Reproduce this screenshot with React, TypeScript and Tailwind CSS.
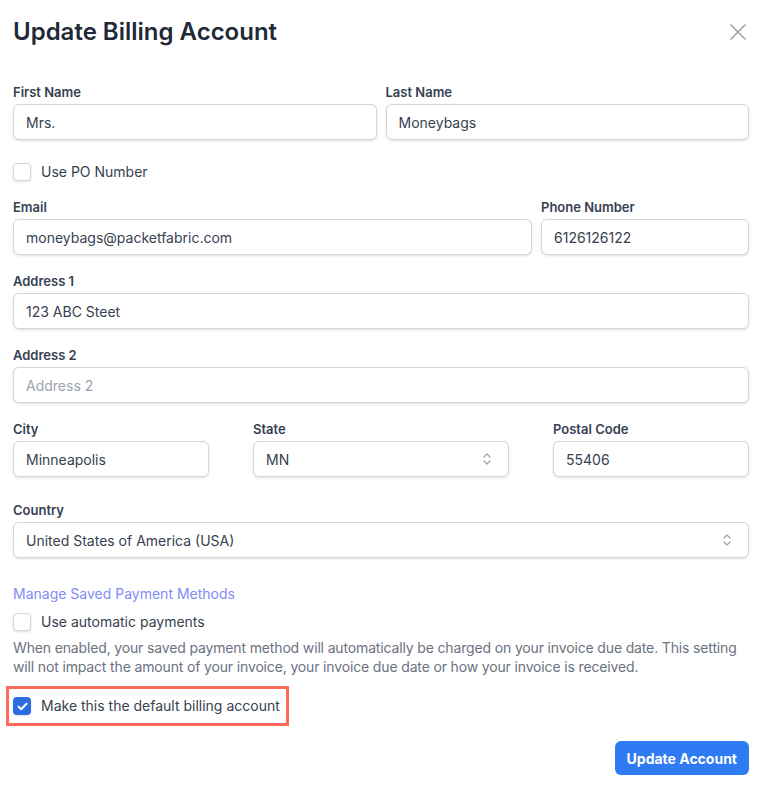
import React from "react";

const FONT = { fontFamily: "Inter, 'Noto Sans', sans-serif" };

function Label({ children }: { children: React.ReactNode }) {
  return <label className="mb-[2px] block text-[13px] font-semibold leading-5 text-[#374151]">{children}</label>;
}

function TextField({ label, value, placeholder }: { label: string; value?: string; placeholder?: string }) {
  return (
    <div>
      <Label>{label}</Label>
      <input
        readOnly
        value={value ?? ""}
        placeholder={placeholder}
        className="block h-9 w-full rounded-md border border-[#d4d6dd] bg-white px-3 text-[14px] text-[#374151] shadow-sm outline-none placeholder:text-[#9ca3af]"
      />
    </div>
  );
}

function UpDown() {
  return (
    <svg width="10" height="14" viewBox="0 0 10 14" fill="none" aria-hidden="true">
      <path d="M2 5 5 2 8 5" stroke="#9ca3af" strokeWidth="1.3" strokeLinecap="round" strokeLinejoin="round" />
      <path d="M2 9 5 12 8 9" stroke="#9ca3af" strokeWidth="1.3" strokeLinecap="round" strokeLinejoin="round" />
    </svg>
  );
}

function SelectField({ label, value }: { label: string; value: string }) {
  return (
    <div>
      <Label>{label}</Label>
      <div className="flex h-9 w-full items-center justify-between rounded-md border border-[#d4d6dd] bg-white pl-3 pr-4 text-[14px] text-[#374151] shadow-sm">
        <span>{value}</span>
        <UpDown />
      </div>
    </div>
  );
}

function Checkbox({ checked, label }: { checked?: boolean; label: string }) {
  return (
    <div className="flex items-center gap-[10px]">
      {checked ? (
        <span className="flex h-[18px] w-[18px] items-center justify-center rounded-[4px] bg-[#2b6de0] shadow">
          <svg width="11" height="9" viewBox="0 0 11 9" fill="none" aria-hidden="true">
            <path d="M1.5 4.6 4.2 7.2 9.5 1.8" stroke="white" strokeWidth="2" strokeLinecap="round" strokeLinejoin="round" />
          </svg>
        </span>
      ) : (
        <span className="h-[18px] w-[18px] rounded-[4px] border border-[#d4d6dd] bg-white shadow" />
      )}
      <span className="text-[14px] leading-5 text-[#374151]">{label}</span>
    </div>
  );
}

export default function App() {
  return (
    <div className="min-h-screen bg-white px-[13px] pt-4 pb-[10px]" style={FONT}>
      <div className="flex items-center justify-between">
        <h1 className="text-[24px] font-semibold leading-8 text-[#1f2937]">Update Billing Account</h1>
        <button className="mr-[2px] text-[#9ca3af]" aria-label="Close">
          <svg width="18" height="18" viewBox="0 0 18 18" fill="none" aria-hidden="true">
            <path d="M2 2 16 16M16 2 2 16" stroke="currentColor" strokeWidth="1.6" strokeLinecap="round" />
          </svg>
        </button>
      </div>

      <div className="mt-[34px] grid grid-cols-2 gap-[9px]">
        <TextField label="First Name" value="Mrs." />
        <TextField label="Last Name" value="Moneybags" />
      </div>

      <div className="mt-[22px]">
        <Checkbox label="Use PO Number" />
      </div>

      <div className="mt-[15px] grid grid-cols-[1fr_208px] gap-[9px]">
        <TextField label="Email" value="moneybags@packetfabric.com" />
        <TextField label="Phone Number" value="6126126122" />
      </div>

      <div className="mt-4">
        <TextField label="Address 1" value="123 ABC Steet" />
      </div>
      <div className="mt-4">
        <TextField label="Address 2" placeholder="Address 2" />
      </div>

      <div className="mt-4 flex justify-between">
        <div className="w-[196px]">
          <TextField label="City" value="Minneapolis" />
        </div>
        <div className="w-[256px]">
          <SelectField label="State" value="MN" />
        </div>
        <div className="w-[196px]">
          <TextField label="Postal Code" value="55406" />
        </div>
      </div>

      <div className="mt-[23px]">
        <SelectField label="Country" value="United States of America (USA)" />
      </div>

      <a className="mt-[26px] block text-[14px] leading-5 text-[#818cf8]">Manage Saved Payment Methods</a>
      <div className="mt-2">
        <Checkbox label="Use automatic payments" />
      </div>
      <p className="mt-[6px] text-[14px] leading-[19px] tracking-[-0.15px] text-[#6b7280]">
        When enabled, your saved payment method will automatically be charged on your invoice due date. This setting
        will not impact the amount of your invoice, your invoice due date or how your invoice is received.
      </p>

      <div className="mt-[10px] -ml-[7px] w-fit border-[3px] border-[#ff6b5b] py-[7px] pl-1 pr-[6px]">
        <Checkbox checked label="Make this the default billing account" />
      </div>

      <div className="mt-[15px] flex justify-end">
        <button className="h-[34px] rounded-md bg-[#2f7bf3] px-3 text-[14px] font-bold text-white">Update Account</button>
      </div>
    </div>
  );
}
